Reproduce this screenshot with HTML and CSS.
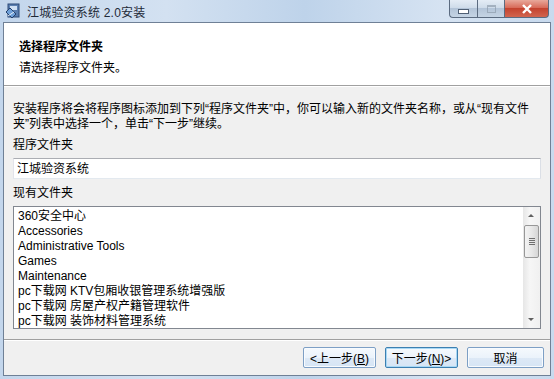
FILE: index.html
```html
<!DOCTYPE html>
<html lang="zh-CN">
  <head>
    <meta charset="UTF-8" />
    <title>江城验资系统 2.0安装</title>
    <link rel="stylesheet" href="styles.css">
  </head>
  <body>
    <div class="window">
      <div class="titlebar">
        <svg class="app-icon" width="16" height="16" viewBox="0 0 16 16">
          <rect x="3" y="1" width="11" height="13" fill="#5b7fb0" stroke="#2d4a78" />
          <rect x="5" y="3" width="7" height="4" fill="#cfe0f4" />
          <path d="M1 9 L7 15 L11 11 L5 5 Z" fill="#6fa0d8" stroke="#24406c" />
          <path d="M3 13 L9 9" stroke="#e8f0fa" />
        </svg>
        <span class="title">江城验资系统 2.0安装</span>
        <div class="controls">
          <div class="ctl min"><span></span></div>
          <div class="ctl max"><span></span></div>
          <div class="ctl close">
            <svg width="12" height="10" viewBox="0 0 12 10">
              <path d="M2 1 L10 9 M10 1 L2 9" stroke="#fff" stroke-width="2.4" />
            </svg>
          </div>
        </div>
      </div>

      <div class="client">
        <div class="header">
          <div class="header-title">选择程序文件夹</div>
          <div class="header-sub">请选择程序文件夹。</div>
        </div>

        <div class="content">
          <p class="intro">安装程序将会将程序图标添加到下列“程序文件夹”中，你可以输入新的文件夹名称，或从“现有文件<br>夹”列表中选择一个，单击“下一步”继续。</p>

          <div class="label">程序文件夹</div>
          <div class="textbox">江城验资系统</div>

          <div class="label">现有文件夹</div>
          <div class="listbox">
            <ul class="items">
              <li>360安全中心</li>
              <li>Accessories</li>
              <li>Administrative Tools</li>
              <li>Games</li>
              <li>Maintenance</li>
              <li>pc下载网 KTV包厢收银管理系统增强版</li>
              <li>pc下载网 房屋产权产籍管理软件</li>
              <li>pc下载网 装饰材料管理系统</li>
            </ul>
            <div class="scrollbar">
              <div class="arrow up"></div>
              <div class="thumb"><i></i><i></i><i></i><i></i></div>
              <div class="track"></div>
              <div class="arrow down"></div>
            </div>
          </div>
        </div>

        <div class="footer">
          <button class="btn">&lt;上一步(<u>B</u>)</button>
          <button class="btn default">下一步(<u>N</u>)&gt;</button>
          <button class="btn cancel">取消</button>
        </div>
      </div>
    </div>
  </body>
</html>
```

FILE: styles.css
```css
body {
  margin: 0;
  font-family: "Liberation Sans", "Noto Sans CJK SC", sans-serif;
  font-size: 12px;
  color: #000;
}

.window {
  width: 554px;
  height: 379px;
  display: flex;
  flex-direction: column;
  background: linear-gradient(90deg, #c3d6ec 0%, #d3e1f1 30%, #bed3ea 55%, #d6e3f2 80%, #c8daee 100%);
  box-sizing: border-box;
  padding: 0 3px 3px 3px;
}

/* title bar */
.titlebar {
  height: 22px;
  display: flex;
  align-items: center;
  position: relative;
}

.app-icon {
  margin-left: 2px;
  margin-right: 6px;
}

.title {
  font-size: 12px;
  color: #1e2a38;
  letter-spacing: 0.2px;
}

.controls {
  position: absolute;
  top: 0;
  right: 2px;
  display: flex;
  height: 18px;
}

.ctl {
  height: 18px;
  display: flex;
  align-items: center;
  justify-content: center;
  border: 1px solid #5b6b80;
  border-top: none;
  box-sizing: border-box;
}

.min,
.max {
  width: 28px;
  background: linear-gradient(#e4ecf5 0%, #cfdcea 45%, #b3c4d8 50%, #c5d4e4 100%);
}

.min {
  border-radius: 0 0 0 4px;
  border-right: none;
}

.min span {
  width: 9px;
  height: 3px;
  margin-top: 5px;
  background: #fff;
  border: 1px solid #4f5f74;
}

.max {
  width: 27px;
  border-right: none;
}

.max span {
  width: 7px;
  height: 5px;
  border: 1px solid #8e9cad;
  border-top-width: 2px;
  opacity: 0.7;
}

.close {
  width: 45px;
  border-radius: 0 0 4px 0;
  background: linear-gradient(#e8a89b 0%, #d86b5a 45%, #c4432f 50%, #d2654f 100%);
}

/* client area */
.client {
  flex: 1;
  display: flex;
  flex-direction: column;
  background: #f0f0f0;
  border: 1px solid #6f8096;
}

.header {
  height: 63px;
  background: #fff;
  border-bottom: 1px solid #a0a0a0;
  box-shadow: 0 1px 0 #fff;
  padding: 15px 0 0 15px;
  box-sizing: border-box;
}

.header-title {
  font-weight: bold;
  line-height: 18px;
}

.header-sub {
  line-height: 18px;
  margin-top: 3px;
}

.content {
  padding: 16px 9px 0 9px;
  flex: 1;
}

.intro {
  margin: 0 0 5px 0;
  line-height: 15px;
  white-space: nowrap;
}

.label {
  line-height: 16px;
  margin-bottom: 5px;
}

.textbox {
  height: 21px;
  box-sizing: border-box;
  background: #fff;
  border: 1px solid #abadb3;
  border-color: #abadb3 #dbdfe6 #e3e9ef #e2e3ea;
  padding: 2px 3px;
  line-height: 16px;
  margin-bottom: 6px;
}

.listbox {
  height: 123px;
  box-sizing: border-box;
  background: #fff;
  border: 1px solid #828790;
  display: flex;
}

.items {
  list-style: none;
  margin: 0;
  padding: 2px 0 0 4px;
  flex: 1;
}

.items li {
  line-height: 15px;
  white-space: nowrap;
}

.scrollbar {
  width: 17px;
  display: flex;
  flex-direction: column;
  background: linear-gradient(90deg, #e6e6e6, #f6f6f6 40%, #f0f0f0);
}

.arrow {
  height: 17px;
  position: relative;
}

.arrow::after {
  content: "";
  position: absolute;
  left: 5px;
  border-left: 3px solid transparent;
  border-right: 3px solid transparent;
}

.arrow.up::after {
  top: 7px;
  border-bottom: 3px solid #606060;
}

.arrow.down::after {
  top: 7px;
  border-top: 3px solid #606060;
}

.thumb {
  height: 31px;
  margin: 1px 1px 0 1px;
  border: 1px solid #979797;
  border-radius: 2px;
  background: linear-gradient(90deg, #f3f3f3, #e8e8e8 50%, #d6d6d6);
  display: flex;
  flex-direction: column;
  align-items: center;
  justify-content: center;
  gap: 1px;
}

.thumb i {
  width: 6px;
  height: 1px;
  background: #6f6f6f;
}

.track {
  flex: 1;
}

.footer {
  height: 36px;
  border-top: 1px solid #a0a0a0;
  box-shadow: inset 0 1px 0 #fff;
  display: flex;
  justify-content: flex-end;
  align-items: flex-start;
  gap: 9px;
  padding: 7px 6px 0 0;
  box-sizing: border-box;
}

.btn {
  width: 73px;
  height: 21px;
  font-family: "Liberation Sans", "Noto Sans CJK SC", sans-serif;
  font-size: 12px;
  color: #000;
  padding: 0;
  border: 1px solid #7d9fc5;
  border-radius: 2px;
  background: linear-gradient(#f5f9fd 0%, #ebf3fb 50%, #dde9f6 51%, #d6e5f5 100%);
  box-shadow: inset 0 0 0 1px #f8fbfe;
}

.btn.default {
  border-color: #3c7fb1;
  box-shadow: inset 0 0 0 1px #a8d8f5;
}

.btn.cancel {
  width: 77px;
}
```
